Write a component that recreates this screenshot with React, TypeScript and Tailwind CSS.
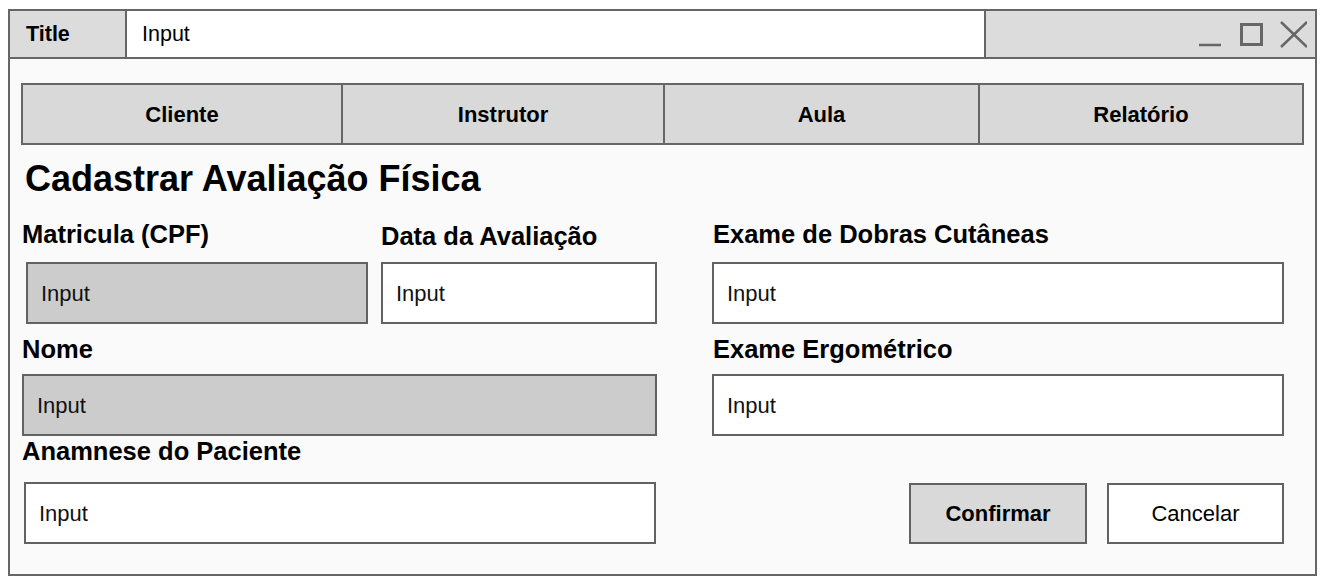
import * as React from "react";

const font = { fontFamily: '"Liberation Sans", Arial, sans-serif' };

function WindowControls() {
  return (
    <svg width="112" height="46" viewBox="0 0 112 46" fill="none" stroke="#666666">
      <line x1="4" y1="34" x2="26" y2="34" strokeWidth="2.5" />
      <rect x="46.5" y="13.5" width="20" height="20" strokeWidth="3" />
      <line x1="86" y1="11" x2="112" y2="36" strokeWidth="2.5" />
      <line x1="112" y1="11" x2="86" y2="36" strokeWidth="2.5" />
    </svg>
  );
}

function Label({children, className = ""}) {
  return (
    <div className={`text-[25.5px] leading-[28px] font-bold text-black whitespace-nowrap ${className}`}>
      {children}
    </div>
  );
}

function Field({gray = false, className = ""}) {
  return (
    <div
      className={`h-[62px] border-2 border-[#626262] flex items-center pl-[13px] text-[22px] text-[#111111] ${
        gray ? "bg-[#cccccc]" : "bg-white"
      } ${className}`}>
      Input
    </div>
  );
}

function Tabs() {
  return (
    <div className="w-[1283px] h-[62px] border-2 border-[#666666] bg-[#d9d9d9] flex text-[22px] font-bold text-black">
      <div className="w-[318px] flex items-center justify-center">Cliente</div>
      <div className="w-[322px] border-l-2 border-[#666666] flex items-center justify-center">Instrutor</div>
      <div className="w-[315px] border-l-2 border-[#666666] flex items-center justify-center">Aula</div>
      <div className="flex-1 border-l-2 border-[#666666] flex items-center justify-center">Relatório</div>
    </div>
  );
}

function App() {
  return (
    <main className="w-full h-[585px] bg-white overflow-hidden pt-[9px] pl-[8px]" style={font}>
      <div className="w-[1309px] h-[567px] border-2 border-[#666666] flex flex-col">
        {/* title bar */}
        <div className="h-[48px] border-b-2 border-[#666666] flex">
          <div className="w-[117px] border-r-2 border-[#666666] bg-[#dcdcdc] pl-[16px] flex items-center text-[21.5px] font-bold text-black">
            Title
          </div>
          <div className="w-[859px] border-r-2 border-[#666666] bg-white pl-[15px] flex items-center text-[21.5px] text-black">
            Input
          </div>
          <div className="flex-1 bg-[#dcdcdc] flex justify-end pr-[8px]">
            <WindowControls />
          </div>
        </div>

        {/* body */}
        <div className="flex-1 bg-[#fafafa] pl-[11px] pt-[24px]">
          <Tabs />

          <h1 className="mt-[14px] ml-[4px] text-[36px] leading-[40px] font-bold text-black">
            Cadastrar Avaliação Física
          </h1>

          <div className="mt-[21px] flex items-start">
            <div className="w-[347px]">
              <Label className="ml-[1px]">Matricula (CPF)</Label>
              <Field gray className="mt-[14px] ml-[5px] w-[342px]" />
            </div>
            <div className="ml-[13px] w-[276px]">
              <Label className="mt-[2px]">Data da Avaliação</Label>
              <Field className="mt-[12px] w-[276px]" />
            </div>
            <div className="ml-[55px] w-[572px]">
              <Label className="ml-[1px]">Exame de Dobras Cutâneas</Label>
              <Field className="mt-[14px] w-[572px]" />
            </div>
          </div>

          <div className="mt-[11px] flex items-start">
            <div className="w-[636px]">
              <Label className="ml-[1px]">Nome</Label>
              <Field gray className="mt-[11px] ml-[1px] w-[635px]" />
            </div>
            <div className="ml-[55px] w-[572px]">
              <Label className="ml-[1px]">Exame Ergométrico</Label>
              <Field className="mt-[11px] w-[572px]" />
            </div>
          </div>

          <div className="mt-[1px] flex items-start">
            <div className="w-[636px]">
              <Label className="ml-[1px]">Anamnese do Paciente</Label>
              <Field className="mt-[17px] ml-[3px] w-[632px]" />
            </div>
            <div className="ml-[55px] w-[572px] pt-[46px] flex justify-end gap-[20px]">
              <button className="w-[178px] h-[61px] border-2 border-[#626262] bg-[#d9d9d9] text-[22px] font-bold text-black">
                Confirmar
              </button>
              <button className="w-[177px] h-[61px] border-2 border-[#626262] bg-white text-[22px] text-black">
                Cancelar
              </button>
            </div>
          </div>
        </div>
      </div>
    </main>
  );
}

export default App;
